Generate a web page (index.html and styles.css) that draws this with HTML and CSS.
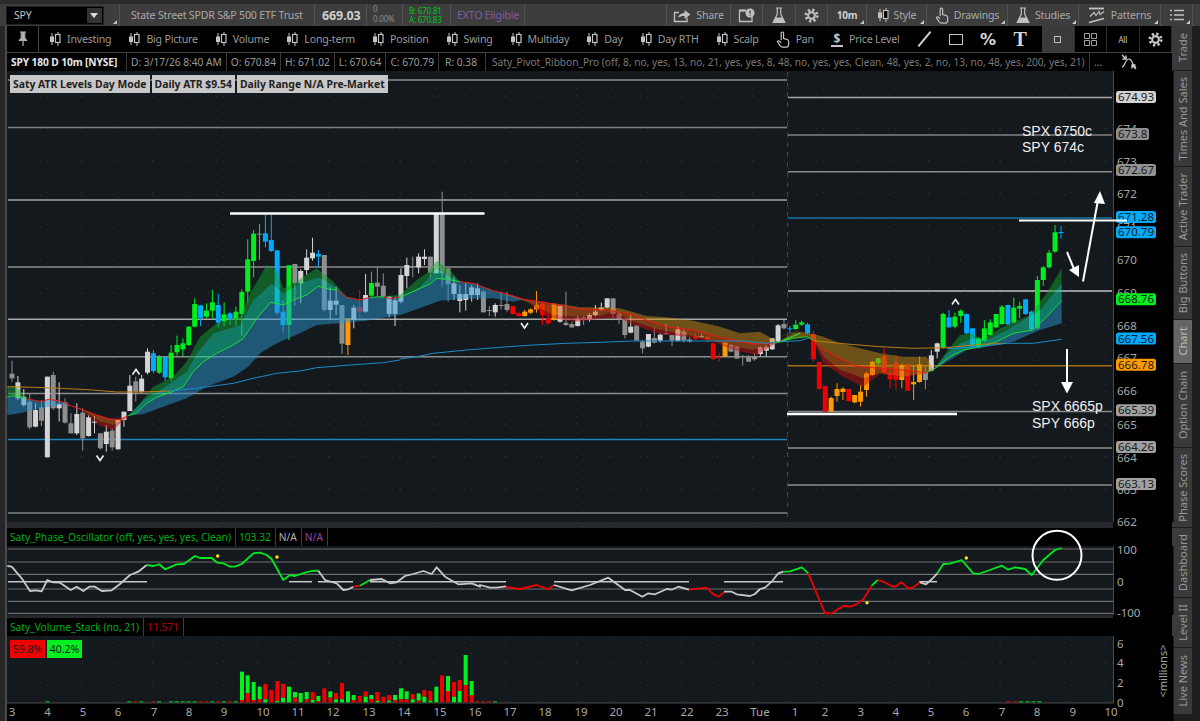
FILE: index.html
```html
<!DOCTYPE html>
<html lang="en">
<head>
    <meta charset="UTF-8">
    <title>SPY 10m Chart</title>
    <link rel="stylesheet" href="styles.css">
</head>
<body>
    <svg class="sprite" width="0" height="0">
        <symbol id="i-candle" viewBox="0 0 12 14">
            <path d="M3 1v12M9 0v14" stroke="currentColor" stroke-width="1"/>
            <rect x="1" y="4.5" width="4" height="5.5" fill="currentColor"/>
            <rect x="6.5" y="2.5" width="4.5" height="8" fill="#000" stroke="currentColor" stroke-width="1.2"/>
        </symbol>
        <symbol id="i-hand" viewBox="0 0 14 17">
            <path d="M5.2 9V2.2a1.2 1.2 0 0 1 2.4 0v5.3l3.2.8c1.2.3 1.9 1 1.9 2.2v2.4c0 2-1.3 3.3-3.2 3.3H6.8c-1.3 0-2.2-.6-2.9-1.7L1.4 10.4c.6-.9 1.6-.8 2.3-.1L5.2 11.6" fill="none" stroke="currentColor" stroke-width="1.2"/>
        </symbol>
        <symbol id="i-flask" viewBox="0 0 14 17">
            <path d="M4 1h6M5.3 1v6L1.2 15.5h11.6L8.7 7V1" fill="none" stroke="currentColor" stroke-width="1.2"/>
            <path d="M3.8 10.5h6.4l2.6 5H1.2z" fill="currentColor"/>
        </symbol>
        <symbol id="i-gear" viewBox="-8 -8 16 16">
            <circle r="6" fill="none" stroke="currentColor" stroke-width="3" stroke-dasharray="2.36 2.36"/>
            <circle r="3.6" fill="none" stroke="currentColor" stroke-width="2.2"/>
        </symbol>
        <symbol id="i-share" viewBox="0 0 18 15">
            <path d="M14 9.5V13.5H1.5V4.5H6" fill="none" stroke="currentColor" stroke-width="1.4"/>
            <path d="M5 10c.6-3.4 3.2-5 6.5-5V2l6 4.6-6 4.4V8c-2.8 0-4.8.6-6.5 2z" fill="currentColor"/>
        </symbol>
        <symbol id="i-alert" viewBox="0 0 17 15">
            <path d="M8 2.5H1.5V13.5H14V9" fill="none" stroke="currentColor" stroke-width="1.3"/>
            <path d="M1.5 2.5h6" stroke="currentColor" stroke-width="2"/>
            <circle cx="12" cy="5" r="4.5" fill="currentColor"/>
            <path d="M12 2.5v3M12 6.5v1" stroke="#3d3d3d" stroke-width="1.3"/>
        </symbol>
        <symbol id="i-pattern" viewBox="0 0 18 17">
            <path d="M1 1.5h15" stroke="currentColor" stroke-width="1.8"/>
            <path d="M2 9.5l4-4 2 3 3-4 1 3 4-3" fill="none" stroke="currentColor" stroke-width="1.2"/>
            <path d="M1 15.5l15-4" stroke="currentColor" stroke-width="1.8"/>
        </symbol>
        <symbol id="i-list" viewBox="0 0 14 12">
            <path d="M0 1.5h2M4 1.5h10M0 6h2M4 6h10M0 10.5h2M4 10.5h10" stroke="currentColor" stroke-width="1.6"/>
        </symbol>
        <symbol id="i-grid" viewBox="0 0 13 13">
            <path d="M.5.5h5v5h-5zM7.5.5h5v5h-5zM.5 7.5h5v5h-5zM7.5 7.5h5v5h-5z" fill="none" stroke="currentColor" stroke-width="1"/>
        </symbol>
        <symbol id="i-pin" viewBox="0 0 10 16">
            <path d="M2 1h6M3.2 1v6L1 9.5h8L6.8 7V1" fill="currentColor" stroke="currentColor" stroke-width="1"/>
            <path d="M5 10v5" stroke="currentColor" stroke-width="1.2"/>
        </symbol>
        <symbol id="i-scale" viewBox="0 0 16 16">
            <path d="M1 13c3 0 3-8 7-8s3 8 7 8" fill="none" stroke="currentColor" stroke-width="1.2"/>
            <path d="M1 1l4 4M5 1.5V5H1.5M15 15l-4-4M11 14.5V11h3.5" fill="none" stroke="currentColor" stroke-width="1.4"/>
        </symbol>
    </svg>

    <header class="top-bar">
        <div class="info-cell symbol-cell corner">
            <div class="symbol-box"><span>SPY</span><span class="symbol-drop"></span></div>
        </div>
        <div class="info-cell desc-cell">State Street SPDR S&amp;P 500 ETF Trust</div>
        <div class="info-cell price-cell">669.03</div>
        <div class="info-cell change-cell"><span>0</span><span>0.00%</span></div>
        <div class="info-cell quote-cell"><span>B: 670.81</span><span>A: 670.83</span></div>
        <div class="info-cell exto-cell">EXTO Eligible</div>
        <div class="top-tools">
            <div class="tool"><svg class="ic-share"><use href="#i-share"/></svg>Share</div>
            <div class="tool"><svg class="ic-alert"><use href="#i-alert"/></svg></div>
            <div class="tool"><svg class="ic-flask"><use href="#i-flask"/></svg></div>
            <div class="tool"><svg class="ic-gear"><use href="#i-gear"/></svg></div>
            <div class="tool corner tool-bold">10m</div>
            <div class="tool corner"><svg class="ic-candle"><use href="#i-candle"/></svg>Style</div>
            <div class="tool corner"><svg class="ic-hand"><use href="#i-hand"/></svg>Drawings</div>
            <div class="tool corner"><svg class="ic-flask"><use href="#i-flask"/></svg>Studies</div>
            <div class="tool corner"><svg class="ic-pattern"><use href="#i-pattern"/></svg>Patterns</div>
            <div class="tool corner"><svg class="ic-list"><use href="#i-list"/></svg></div>
        </div>
    </header>

    <div class="main">
        <div class="left-rail"></div>
        <div class="work">
            <nav class="quick-bar">
                <div class="pin-cell"><svg class="ic-pin"><use href="#i-pin"/></svg></div>
                <div class="quick-items">
                    <div class="quick"><svg class="ic-candle"><use href="#i-candle"/></svg>Investing</div>
                    <div class="quick"><svg class="ic-candle"><use href="#i-candle"/></svg>Big Picture</div>
                    <div class="quick"><svg class="ic-candle"><use href="#i-candle"/></svg>Volume</div>
                    <div class="quick"><svg class="ic-candle"><use href="#i-candle"/></svg>Long-term</div>
                    <div class="quick"><svg class="ic-candle"><use href="#i-candle"/></svg>Position</div>
                    <div class="quick"><svg class="ic-candle"><use href="#i-candle"/></svg>Swing</div>
                    <div class="quick"><svg class="ic-candle"><use href="#i-candle"/></svg>Multiday</div>
                    <div class="quick"><svg class="ic-candle"><use href="#i-candle"/></svg>Day</div>
                    <div class="quick"><svg class="ic-candle"><use href="#i-candle"/></svg>Day RTH</div>
                    <div class="quick"><svg class="ic-candle"><use href="#i-candle"/></svg>Scalp</div>
                    <div class="quick"><svg class="ic-hand"><use href="#i-hand"/></svg>Pan</div>
                    <div class="quick"><span class="dollar">$</span>Price Level</div>
                </div>
                <div class="draw-tools">
                    <div class="draw"><span class="draw-line"></span></div>
                    <div class="draw"><span class="draw-rect"></span></div>
                    <div class="draw draw-pct">%</div>
                    <div class="draw draw-t">T</div>
                </div>
                <div class="view-tools">
                    <div class="view view-on"><span class="view-box"></span></div>
                    <div class="view"><svg class="ic-grid"><use href="#i-grid"/></svg></div>
                    <div class="view view-all">All</div>
                    <div class="view"><svg class="ic-gear"><use href="#i-gear"/></svg></div>
                </div>
            </nav>

            <div class="legend-row">
                <div class="legend-cells">
                    <span class="legend-cell legend-title">SPY 180 D 10m [NYSE]</span>
                    <span class="legend-cell">D: 3/17/26 8:40 AM</span>
                    <span class="legend-cell">O: 670.84</span>
                    <span class="legend-cell">H: 671.02</span>
                    <span class="legend-cell">L: 670.64</span>
                    <span class="legend-cell">C: 670.79</span>
                    <span class="legend-cell legend-range">R: 0.38</span>
                    <span class="legend-cell legend-study">Saty_Pivot_Ribbon_Pro (off, 8, no, yes, 13, no, 21, yes, yes, 8, 48, no, yes, yes, Clean, 48, yes, 2, no, 13, no, 48, yes, 200, yes, 21)</span>
                    <span class="legend-cell legend-more">...</span>
                </div>
                <div class="legend-axis"><svg class="ic-scale"><use href="#i-scale"/></svg></div>
            </div>

            <div class="price-pane">
                <svg id="priceChart" class="pane-svg" viewBox="7 71 1165 451" width="1165" height="451"></svg>
                <div class="atr-labels">
                    <span class="atr-label">Saty ATR Levels Day Mode</span>
                    <span class="atr-label">Daily ATR $9.54</span>
                    <span class="atr-label">Daily Range N/A Pre-Market</span>
                </div>
            </div>
            <div class="pane-gap"></div>

            <div class="study-head">
                <span class="study-cell study-green">Saty_Phase_Oscillator (off, yes, yes, yes, Clean)</span>
                <span class="study-cell study-green">103.32</span>
                <span class="study-cell study-grey">N/A</span>
                <span class="study-cell study-purple">N/A</span>
            </div>
            <svg id="oscChart" class="pane-svg" viewBox="7 546 1165 69" width="1165" height="69"></svg>
            <div class="pane-gap pane-gap-small"></div>

            <div class="study-head">
                <span class="study-cell study-green">Saty_Volume_Stack (no, 21)</span>
                <span class="study-cell study-red">11.571</span>
            </div>
            <div class="volume-pane">
                <svg id="volChart" class="pane-svg" viewBox="7 636 1165 85" width="1165" height="85"></svg>
                <div class="vol-badges">
                    <span class="vol-badge vol-sell">59.8%</span>
                    <span class="vol-badge vol-buy">40.2%</span>
                </div>
            </div>
        </div>

        <aside class="side-tabs">
            <div class="side-tab tab-trade"><span>Trade</span></div>
            <div class="side-tab tab-times"><span>Times And Sales</span></div>
            <div class="side-tab tab-active"><span>Active Trader</span></div>
            <div class="side-tab tab-big"><span>Big Buttons</span></div>
            <div class="side-tab tab-chart"><span>Chart</span></div>
            <div class="side-tab tab-option"><span>Option Chain</span></div>
            <div class="side-tab tab-phase"><span>Phase Scores</span></div>
            <div class="side-tab tab-dash"><span>Dashboard</span></div>
            <div class="side-tab tab-level"><span>Level II</span></div>
            <div class="side-tab tab-news"><span>Live News</span></div>
        </aside>
    </div>

    <script src="chart.js"></script>
</body>
</html>
```

FILE: styles.css
```css
* {
    margin: 0;
    padding: 0;
    box-sizing: border-box;
    font-family: "Noto Sans", "Open Sans", sans-serif;
}

html, body {
    width: 1200px;
    height: 721px;
    overflow: hidden;
    background: #1e1e1e;
}

.sprite {
    position: absolute;
}

svg {
    display: block;
}

/* top bar */
.top-bar {
    display: flex;
    height: 26px;
    padding-right: 7px;
    background: #3d3d3d;
    border-top: 4px solid #2a2a2a;
    color: #a8a8a8;
    font-size: 10.6px;
    letter-spacing: -0.2px;
}

.info-cell {
    display: flex;
    align-items: center;
    height: 22px;
    border-right: 1px solid #525252;
}

.corner {
    position: relative;
}

.corner::after {
    content: "";
    position: absolute;
    right: 2px;
    bottom: 2px;
    border-left: 4px solid transparent;
    border-bottom: 4px solid #c4c4c4;
}

.symbol-cell {
    width: 120px;
    padding-left: 6px;
}

.symbol-box {
    display: flex;
    align-items: center;
    justify-content: space-between;
    width: 98px;
    height: 19px;
    padding: 0 1px 0 7px;
    background: #000;
    border: 1px solid #222;
    color: #c4c4c4;
    font-size: 10.5px;
}

.symbol-drop {
    position: relative;
    width: 15px;
    height: 15px;
    background: #333;
}

.symbol-drop::after {
    content: "";
    position: absolute;
    left: 3px;
    top: 5px;
    border-left: 4px solid transparent;
    border-right: 4px solid transparent;
    border-top: 5px solid #ddd;
}

.desc-cell {
    width: 195px;
    padding-left: 11px;
    white-space: nowrap;
}

.price-cell {
    width: 52px;
    padding-left: 7px;
    color: #cfcfcf;
    font-size: 12.5px;
    font-weight: 700;
    letter-spacing: -0.1px;
}

.change-cell {
    flex-direction: column;
    align-items: flex-start;
    width: 36px;
    padding-left: 6px;
    font-size: 8px;
    line-height: 9.5px;
    color: #8c8c8c;
}

.quote-cell {
    flex-direction: column;
    align-items: flex-start;
    justify-content: center;
    width: 48px;
    padding-left: 6px;
    font-size: 8px;
    line-height: 9.5px;
    color: #00c21e;
}

.exto-cell {
    width: 74px;
    padding-left: 6px;
    color: #7d5cab;
    white-space: nowrap;
}

.top-tools {
    display: grid;
    grid-template-columns: 64px 32px 33px 32px 39px 60px 81px 71px 82px 32px;
    height: 22px;
    margin-left: auto;
    border-left: 1px solid #525252;
}

.tool {
    display: flex;
    align-items: center;
    justify-content: center;
    gap: 5px;
    border-right: 1px solid #525252;
    white-space: nowrap;
}

.tool svg {
    color: #c0c0c0;
}

.tool-bold {
    color: #d0d0d0;
    font-size: 10px;
    font-weight: 700;
}

.ic-share { width: 18px; height: 15px; }
.ic-alert { width: 17px; height: 15px; }
.ic-flask { width: 14px; height: 17px; }
.ic-gear { width: 15px; height: 15px; }
.ic-candle { width: 12px; height: 14px; }
.ic-hand { width: 14px; height: 17px; }
.ic-pattern { width: 18px; height: 17px; }
.ic-list { width: 14px; height: 12px; }
.ic-pin { width: 10px; height: 16px; color: #b0b0b0; }
.ic-grid { width: 13px; height: 13px; color: #a0a0a0; }
.ic-scale { width: 16px; height: 16px; color: #cfcfcf; }

/* main area */
.main {
    display: flex;
    height: 695px;
}

.left-rail {
    width: 7px;
    background: #262626;
    border-right: 2px solid #4a4a4a;
}

.work {
    width: 1165px;
    background: #000;
}

.quick-bar {
    display: flex;
    height: 27px;
    background: #000;
    border-bottom: 1px solid #444;
    color: #9a9a9a;
    font-size: 10.6px;
    letter-spacing: -0.2px;
}

.pin-cell {
    display: flex;
    align-items: center;
    justify-content: center;
    width: 32px;
    border-right: 1px solid #444;
}

.quick-items {
    display: flex;
    align-items: center;
    gap: 17px;
    width: 869px;
    padding-left: 10px;
}

.quick {
    display: flex;
    align-items: center;
    gap: 6px;
    white-space: nowrap;
}

.quick svg {
    color: #c4c4c4;
}

.dollar {
    width: 12px;
    border-bottom: 2px solid #c4c4c4;
    color: #c4c4c4;
    font-size: 12px;
    font-weight: 700;
    line-height: 13px;
    text-align: center;
}

.draw-tools {
    display: grid;
    grid-template-columns: repeat(4, 32px);
    width: 134px;
}

.draw {
    display: flex;
    align-items: center;
    justify-content: center;
    color: #d8d8d8;
}

.draw-line {
    width: 19px;
    height: 2px;
    background: #d0d0d0;
    transform: rotate(-50deg);
}

.draw-rect {
    width: 14px;
    height: 11px;
    border: 1px solid #c4c4c4;
}

.draw-pct {
    font-family: "DejaVu Sans", sans-serif;
    font-size: 16px;
    font-weight: 700;
}

.draw-t {
    font-family: "Liberation Serif", serif;
    font-size: 20px;
    font-weight: 700;
}

.view-tools {
    display: grid;
    grid-template-columns: repeat(4, 32.5px);
}

.view {
    display: flex;
    align-items: center;
    justify-content: center;
    border-right: 1px solid #2c2c2c;
    color: #c8c8c8;
}

.view-on {
    background: #3a3a3a;
}

.view-box {
    width: 7px;
    height: 7px;
    border: 1px solid #c0c0c0;
}

.view-all {
    font-size: 8px;
}

.legend-row {
    display: flex;
    height: 18px;
}

.legend-cells {
    display: flex;
    gap: 1px;
    width: 1106px;
    background: #3a3a3a;
}

.legend-cell {
    display: flex;
    align-items: center;
    padding: 0 4px;
    background: #000;
    color: #9a9a9a;
    font-size: 10.2px;
    white-space: nowrap;
}

.legend-title {
    width: 119px;
    padding: 0 0 0 4px;
    color: #e8e8e8;
    font-weight: 700;
    letter-spacing: -0.1px;
}

.legend-range {
    padding-right: 8px;
    padding-left: 6px;
}

.legend-study {
    flex: 1;
    padding-left: 6px;
    color: #7a7a7a;
    font-size: 10.15px;
}

.legend-more {
    width: 23px;
}

.legend-axis {
    padding: 1px 0 0 8px;
}

.price-pane {
    position: relative;
    height: 451px;
}

.pane-svg {
    overflow: visible;
    position: relative;
}

.chart-note {
    font-family: "Liberation Sans", Arial, sans-serif;
}

.atr-labels {
    position: absolute;
    left: 3px;
    top: 4px;
    display: flex;
    gap: 2px;
}

.atr-label {
    height: 18px;
    padding: 0 3px;
    background: #c8c8c8;
    color: #222;
    font-size: 10.4px;
    font-weight: 700;
    line-height: 18px;
    white-space: nowrap;
}

.pane-gap {
    width: 1106px;
    height: 6px;
    background: #26282b;
}

.pane-gap-small {
    height: 3px;
}

.study-head {
    display: flex;
    width: 1106px;
    height: 18px;
    background: #000;
}

.study-cell {
    display: flex;
    align-items: center;
    padding: 0 4px 0 3px;
    border-right: 1px solid #3c3c3c;
    font-size: 10.2px;
    white-space: nowrap;
}

.study-green { color: #00b01a; }
.study-grey { color: #b4b4b4; }
.study-purple { color: #a040a8; }
.study-red { color: #b00000; }

.volume-pane {
    position: relative;
}

.vol-badges {
    position: absolute;
    left: 3px;
    top: 4px;
    display: flex;
    gap: 2px;
}

.vol-badge {
    width: 35px;
    height: 18px;
    color: #1a1a1a;
    font-size: 10.5px;
    line-height: 18px;
    text-align: center;
}

.vol-sell { background: #f00000; }
.vol-buy { background: #00f020; }

/* side tabs */
.side-tabs {
    display: flex;
    flex-direction: column;
    gap: 1px;
    width: 20px;
}

.side-tab {
    display: flex;
    align-items: center;
    justify-content: center;
    background: #3a3a3a;
    color: #999;
    font-size: 11px;
}

.side-tab span {
    writing-mode: vertical-rl;
    transform: rotate(180deg);
    white-space: nowrap;
}

.tab-trade { height: 44px; }
.tab-times { height: 95px; }
.tab-active { height: 79px; }
.tab-big { height: 72px; }
.tab-chart { height: 43px; background: #666; color: #bbb; }
.tab-option { height: 83px; }
.tab-phase { height: 79px; }
.tab-dash { height: 69px; }
.tab-level { height: 49px; }
.tab-news { height: 66px; }
```

FILE: chart.js
```js
const NS = "http://www.w3.org/2000/svg";

function add(parent, name, attrs, text) {
    const node = document.createElementNS(NS, name);
    for (const key in attrs) node.setAttribute(key, attrs[key]);
    if (text !== undefined) node.textContent = text;
    parent.appendChild(node);
    return node;
}

// points were read off 3x crops, so every list carries the crop origin
function pts(ox, oy, list) {
    const out = [];
    for (let i = 0; i < list.length; i += 2) {
        out.push([ox + list[i] / 3, oy + list[i + 1] / 3]);
    }
    return out;
}
const A = list => pts(0, 190, list);
const B = list => pts(400, 190, list);
const C = list => pts(780, 200, list);

const toStr = p => p.map(q => q[0].toFixed(1) + "," + q[1].toFixed(1)).join(" ");

const COLORS = {
    g: "#00ee20",
    b: "#00aaff",
    w: "#d4d4d4",
    y: "#8e8e8e",
    r: "#f00000",
    o: "#ff9a00"
};

const AXIS_X = 1113.5;

/* ---------- price pane ---------- */
const price = document.getElementById("priceChart");
add(price, "rect", { x: 7, y: 71, width: 1107, height: 451, fill: "#14191e" });
add(price, "rect", { x: AXIS_X, y: 71, width: 60, height: 451, fill: "#000" });

// faint dotted grid
for (let x = 47; x < 1113; x += 35.3) {
    add(price, "line", { x1: x, x2: x, y1: 72, y2: 522, stroke: "#2c3238", "stroke-dasharray": "1 7" });
}
for (let y = 96; y < 522; y += 32.8) {
    add(price, "line", { x1: 8, x2: 1113, y1: y, y2: y, stroke: "#2c3238", "stroke-dasharray": "1 7" });
}

// session break
add(price, "line", { x1: 787.5, x2: 787.5, y1: 72, y2: 522, stroke: "#3e444a", "stroke-dasharray": "5 5" });

const levels = [
    [8, 787, 80, "#8c8c8c"], [8, 787, 127.5, "#7c7c7c"], [8, 787, 200, "#a4a4a4"],
    [8, 787, 267, "#8c8c8c"], [8, 787, 319.3, "#a8a8a8"], [8, 787, 356.7, "#8c8c8c"],
    [8, 787, 393.5, "#8c8c8c"], [8, 787, 439.5, "#1e86bc"], [8, 787, 513, "#808080"],
    [788, 1112, 97.5, "#a4a4a4"], [788, 1112, 135, "#808080"], [788, 1112, 171.7, "#8c8c8c"],
    [788, 1112, 218, "#1672a4"], [788, 1112, 291, "#c0c0c0"], [788, 1112, 365.8, "#a66c10"],
    [788, 1112, 411.5, "#8c8c8c"], [788, 1112, 448, "#8c8c8c"], [788, 1112, 485, "#8c8c8c"]
];
levels.forEach(l => {
    add(price, "line", { x1: l[0], x2: l[1], y1: l[2], y2: l[2], stroke: l[3], "stroke-width": 1.5 });
});

// [top, bottom, wick top, wick bottom, colour]
const candlesA = [
    [551,565,512,575,"y"],[577,625,558,630,"w"],[620,645,597,650,"w"],[635,712,610,718,"y"],[660,710,640,712,"w"],
    [652,692,630,708,"y"],[560,802,560,802,"w"],[555,655,545,660,"y"],[642,655,577,695,"w"],[637,698,625,700,"y"],
    [700,730,670,730,"y"],[672,730,640,735,"w"],[668,745,655,782,"y"],[682,738,675,740,"w"],[695,698,678,730,"w"],
    [730,775,730,778,"y"],[725,762,705,785,"w"],[722,772,715,782,"y"],[690,778,690,778,"w"],[665,690,665,710,"w"],
    [587,663,555,663,"w"],[574,605,560,635,"y"],[566,605,555,608,"w"],[485,548,475,553,"w"],[490,543,480,550,"b"],
    [500,548,495,552,"g"],[501,562,500,573,"b"],[488,565,465,573,"g"],[465,487,437,497,"g"],[460,478,445,500,"g"],
    [410,465,408,468,"g"],[342,410,325,412,"g"],[346,384,345,408,"b"],[362,380,340,385,"g"],[337,362,300,385,"g"],
    [345,398,312,412,"b"],[373,394,337,408,"g"],[370,388,365,405,"b"],[365,388,350,408,"g"],[306,372,298,438,"g"],
    [208,305,148,338,"g"],[131,213,120,262,"g"],[131,134,102,210,"y"],[130,155,75,172,"b"],[150,183,75,186,"b"],
    [181,368,180,375,"b"],[365,405,332,428,"b"],[226,405,226,450,"g"],[222,280,222,347,"y"],[243,280,238,340,"w"],
    [203,240,178,255,"w"],[188,205,143,212,"w"],[192,200,180,232,"b"],[195,360,195,365,"y"],[332,360,292,388,"w"],
    [332,344,290,375,"w"],[345,461,345,492,"y"],[385,465,385,495,"o"],[353,390,345,415,"w"],[352,365,300,385,"r"],
    [315,365,252,368,"w"],[279,317,245,320,"g"],[278,290,233,320,"y"],[287,320,250,325,"y"],[320,372,318,382,"w"],
    [331,372,320,408,"w"],
    // these carry on into the next crop, same origin
    [255,335,235,340,"w"],[225,258,203,295,"w"],[228,231,200,262,"y"],[200,232,190,250,"w"],[200,207,178,225,"w"],
    [200,248,200,262,"y"],[70,250,70,250,"w"],[70,250,5,290,"y"],[235,283,235,335,"y"],[280,312,260,330,"w"],
    [312,333,285,367,"w"],[312,330,280,362,"w"],[292,315,285,335,"w"],[295,315,280,330,"w"],[305,367,300,367,"y"],
    [360,362,348,378,"y"],[345,367,340,380,"w"],[345,348,305,358,"y"],[342,360,305,365,"y"],[348,372,348,373,"r"],
    [370,378,365,380,"r"],[365,378,360,380,"o"],[358,368,355,372,"o"],[346,358,303,368,"o"],[342,375,335,405,"r"],
    [385,400,345,403,"r"],[343,390,340,392,"o"],[348,395,345,398,"w"],[398,405,305,408,"y"],[402,412,395,414,"y"],
    [385,408,378,410,"w"],[382,385,378,405,"y"],[375,387,370,395,"w"],[365,375,345,380,"w"],[353,360,338,362,"w"],
    [325,353,325,355,"w"],[325,372,325,388,"y"],[372,388,365,402,"y"],[388,435,388,445,"y"],[410,428,375,430,"w"],
    [406,452,406,452,"y"],[455,475,450,490,"y"],[432,470,432,472,"w"],[444,458,412,460,"y"],[434,452,430,458,"w"],
    [430,432,400,432,"y"],[435,452,435,468,"y"],[418,452,410,455,"w"],[424,452,415,458,"y"],[448,455,440,458,"y"],
    [438,448,430,450,"r"],[438,442,430,443,"y"],[441,449,438,458,"r"],[460,507,458,510,"r"],[500,502,488,515,"r"],
    [458,500,458,500,"o"],[465,485,462,487,"y"],[470,506,468,506,"y"],[498,500,495,527,"y"],[500,515,495,516,"y"],
    [500,508,490,512,"y"],[472,492,470,498,"w"],[470,482,465,500,"w"],[445,478,445,480,"w"],[406,455,402,458,"w"]
];
const candlesC = [
    [372,385,360,388,"y"],[385,388,378,400,"b"],[374,387,360,390,"g"],[367,374,362,378,"g"],[373,400,368,403,"b"],
    [402,478,392,485,"r"],[486,567,484,570,"r"],[558,635,558,635,"r"],[594,635,590,635,"o"],[567,588,550,605,"o"],
    [566,576,562,600,"o"],[567,603,567,606,"r"],[585,607,585,610,"o"],[575,605,555,620,"o"],[520,570,515,590,"o"],
    [485,525,483,527,"o"],[475,490,475,495,"g"],[468,518,445,520,"r"],[518,538,492,565,"r"],[488,540,465,568,"r"],
    [495,540,490,565,"o"],[493,572,490,572,"r"],[546,553,495,600,"o"],[493,546,470,548,"o"],[517,540,500,568,"y"],
    [466,512,450,514,"w"],[430,455,428,475,"w"],[342,442,338,445,"g"],[352,382,330,383,"b"],[350,380,338,385,"g"],
    [332,348,328,368,"g"],[342,400,340,402,"b"],[385,440,385,442,"b"],[415,443,412,445,"g"],[385,422,360,425,"g"],
    [367,405,358,408,"g"],[342,382,342,385,"g"],[320,372,315,375,"g"],[315,373,315,375,"b"],[323,368,293,370,"g"],
    [318,326,305,355,"g"],[298,342,298,345,"b"],[335,388,332,390,"b"],[240,385,228,388,"g"],[202,240,198,258,"g"],
    [158,202,150,205,"g"],[97,155,75,158,"g"],[96,99,78,116,"b"]
];

const STEP = 5.893;
function drawCandle(i, c, baseY) {
    const x = 12 + i * STEP;
    const y = v => baseY + v / 3;
    const fill = COLORS[c[4]];
    add(price, "line", { x1: x, x2: x, y1: y(c[2]), y2: y(c[3]), stroke: fill, "stroke-width": 1 });
    add(price, "rect", { x: x - 2.5, y: y(c[0]), width: 5, height: Math.max(1, (c[1] - c[0]) / 3), fill: fill });
}
candlesA.forEach((c, i) => drawCandle(i, c, 190));
candlesC.forEach((c, i) => drawCandle(i + candlesA.length, c, 200));

function band(top, bottom, fill, opacity) {
    add(price, "polygon", {
        points: toStr(top.concat(bottom.slice().reverse())),
        fill: fill,
        "fill-opacity": opacity
    });
}

const BLUE = "#2a96d0", GREEN = "#10a030", TEAL = "#10c8a0";
const BROWN = "#c88a10", ORANGE = "#e06010", RED = "#c81010";

// ribbon: first stretch on the far left
const line1 = A([22,620,40,617,60,620,80,627,100,630,125,635,145,628,180,633,215,648]);
band(line1, A([22,675,60,670,100,660,140,652,180,645,215,648]), BLUE, .5);
band(A([22,590,40,588,60,600,80,627]), A([22,620,40,617,60,620,80,627]), GREEN, .5);

const red1 = A([215,648,250,660,290,675,330,687,360,688,385,677]);
band(red1, A([215,648,250,662,300,695,340,705,385,677]), ORANGE, .5);
band(A([215,648,250,662,300,695,340,705,385,677]), A([215,648,250,664,300,708,340,720,385,677]), RED, .5);

// long bull stretch
const bull2 = A([385,677,410,668,440,640,470,622,510,608,550,590,580,545,610,515,650,490,700,465,730,445,770,385,812,337,850,345,880,330,920,315,955,289,990,298,1010,300])
    .concat(A([1040,322,1080,330,1110,322,1150,320,1170,325,1200,322])).concat(B([50,300,90,282,110,265,140,268,180,275,220,280,280,302,330,315,370,328]));
const blue2 = A([385,677,430,672,490,650,560,625,620,590,700,560,745,530,780,490,830,460,900,430,950,405,1020,400,1100,392,1200,375])
    .concat(B([50,358,100,340,120,332,200,326,280,325,340,335,370,328]));
band(bull2, blue2, BLUE, .5);
const ema13 = A([385,677,430,630,480,600,560,545,590,490,640,430,720,405,760,330,815,280,850,310,900,280,955,262,1000,285,1040,322,1080,330,1110,322,1200,320])
    .concat(B([60,290,110,235,140,255,180,275]));
const ema21top = A([385,677,410,668,440,640,470,622,510,608,550,590,580,545,610,515,650,490,700,465,730,445,770,385,812,337,850,345,880,330,920,315,955,289,990,298,1010,300,1040,322,1080,330,1110,322,1150,320,1200,322])
    .concat(B([50,300,90,282,110,265,140,268,180,275]));
band(ema13, ema21top, TEAL, .55);
const ema8 = A([385,677,420,640,460,590,520,560,560,515,600,440,650,400,720,380,750,310,800,225,830,240,850,295,880,280,950,235,1000,275,1040,320,1080,330,1110,322,1200,315])
    .concat(B([50,270,80,250,110,212,150,240,180,275]));
band(ema8, ema13, GREEN, .5);

// long bear stretch, the red line runs through the middle
const red2 = B([280,302,330,315,370,328,420,335,480,345,540,357,620,360,690,372,740,390,800,410,880,420,940,437,1000,450,1060,462,1120,460,1135,456]);
const brown2 = B([280,302,330,315,370,328,420,335,480,342,540,352,600,352,660,355,740,378,800,382,880,392,960,410,1020,430,1080,425,1135,456]);
const or2 = B([280,302,380,335,460,375,520,380,600,378,640,365,700,395,780,420,860,435,940,452,1000,470,1060,480,1135,456]);
const dr2 = B([280,302,380,335,440,380,520,395,620,385,660,385,700,405,780,432,860,440,940,455,1000,480,1070,495,1135,456]);
band(brown2, red2, BROWN, .5);
band(red2, or2, ORANGE, .5);
band(or2, dr2, RED, .5);

// short stretch at the open
const openLine = B([1135,456,1160,450,1200,430]).concat(C([0,425,40,415,80,410,100,420]));
band(B([1135,456,1160,440,1200,420]).concat(C([0,410,60,395,100,402])), openLine, BROWN, .5);

// morning bear stretch
const red3 = C([100,420,130,448,170,470,230,498,300,505,370,510,440,518,460,510]);
const brown3 = C([100,402,130,410,180,430,240,445,300,460,370,470,440,470,460,510]);
const or3 = C([100,420,130,470,180,510,250,535,300,520,370,530,440,518,460,510]);
const dr3 = C([100,420,130,490,190,530,250,560,300,522,370,532,440,520,460,510]);
band(brown3, red3, BROWN, .5);
band(red3, or3, ORANGE, .5);
band(or3, dr3, RED, .5);

// last bull stretch
const line4 = C([460,510,510,470,550,450,600,440,650,425,700,400,760,390,800,350,845,302]);
band(line4, C([460,510,510,480,560,450,620,440,700,425,780,390,845,370]), BLUE, .5);
const m13 = C([460,510,500,460,540,430,580,415,620,420,680,390,720,365,780,330,845,250]);
band(m13, line4, TEAL, .55);
band(C([460,510,500,455,540,405,575,400,610,420,660,385,750,345,800,280,845,205]), m13, GREEN, .5);

// ribbon edges and slow averages
function curve(svg, points, colour, width) {
    add(svg, "polyline", {
        points: toStr(points),
        fill: "none",
        stroke: colour,
        "stroke-width": width,
        "stroke-linejoin": "round"
    });
}
curve(price, A([22,620,40,617,60,620,80,627]), "#1fdc3a", 1);
curve(price, A([80,627,100,630,125,635,145,628,180,633,215,648,250,660,290,675,330,687,360,688,385,677]), "#f01818", 1);
curve(price, A([385,677,410,668,440,640,470,622,510,608,550,590,580,545,610,515,650,490,700,465,730,445,770,385,812,337,850,345,880,330,920,315,955,289,990,298,1010,300]), "#1fdc3a", 1);
curve(price, A([1010,300,1040,322,1080,330,1110,322]), "#f01818", 1);
curve(price, A([1110,322,1150,320]), "#1fdc3a", 1);
curve(price, A([1150,320,1170,325,1200,322]), "#f01818", 1);
curve(price, B([0,322,50,300,90,282,110,265,140,268,180,275]), "#1fdc3a", 1);
curve(price, B([180,275,220,280,280,302,330,315,370,328,420,335,480,345,540,357,620,360,690,372,740,390,800,410,880,420,940,437,1000,450,1060,462,1120,460]), "#f01818", 1);
curve(price, B([1120,460,1140,456,1200,430]).concat(C([0,425,40,415,80,410,100,420])), "#1fdc3a", 1);
curve(price, C([100,420,130,448,170,470,230,498,300,505,370,510,440,518]), "#f01818", 1);
curve(price, C([440,518,465,505,510,470,550,450,600,440,650,425,700,400,760,390,800,350,845,302]), "#1fdc3a", 1);

curve(price, A([22,590,100,592,180,595,280,600,350,606,420,606,510,603]), "#c07c10", 1);
curve(price, A([510,603,590,595,700,580,760,565,830,550,900,543,950,533,1050,525,1150,518,1200,510]), "#1a8cc8", 1);
curve(price, B([0,507,50,500,100,490,200,480,300,472,400,465,500,460,600,457,700,453,1030,453,1100,460,1135,455]), "#1a8cc8", 1);
curve(price, C([0,425,60,422,85,414]), "#1a8cc8", 1);
curve(price, C([100,422,200,432,300,440,400,445,500,443,600,433,680,430]), "#c07c10", 1);
curve(price, C([500,446,600,440,680,430,760,430,845,418]), "#1a8cc8", 1);

// small chevrons
function chevron(x, y, up) {
    const d = up ? -2.5 : 2.5;
    add(price, "polyline", {
        points: (x - 3.5) + "," + (y - d) + " " + x + "," + (y + d) + " " + (x + 3.5) + "," + (y - d),
        fill: "none", stroke: "#f0f0f0", "stroke-width": 1.6
    });
}
chevron(136, 372, true);
chevron(100, 458, false);
chevron(524.5, 325.5, false);
chevron(955.5, 302, true);

// price axis
add(price, "line", { x1: AXIS_X, x2: AXIS_X, y1: 71, y2: 522, stroke: "#4a4a4a" });
const ticks = [[674,129],[673,161.5],[672,194],[671,227],[670,260],[669,292.5],[668,325.5],[667,358],[666,391],[665,424.5],[664,457.5],[663,490],[662,522]];
ticks.forEach(t => {
    add(price, "text", { x: 1117, y: t[1] + 4, fill: "#a8a8a8", "font-size": 11.5 }, t[0]);
});
const priceTags = [
    [97, "674.93", "#d2d2d2", 40], [134, "673.8", "#8e8e8e", 33], [170, "672.67", "#929292", 40],
    [217, "671.28", "#00aaff", 40], [232.3, "670.79", "#00aaff", 40], [299.3, "668.76", "#00f020", 40],
    [338.5, "667.56", "#00aaff", 40], [364.7, "666.78", "#ff9a00", 40], [410.3, "665.39", "#a0a0a0", 40],
    [447, "664.26", "#a0a0a0", 40], [484, "663.13", "#a0a0a0", 40]
];
priceTags.forEach(t => {
    add(price, "rect", { x: 1116, y: t[0] - 6, width: t[3], height: 12, rx: 2.5, fill: t[2] });
    add(price, "text", { x: 1118, y: t[0] + 4, fill: "#1a1a1a", "font-size": 11.5 }, t[1]);
});

// hand drawn marks
const MARK = "#ffffff";
add(price, "line", { x1: 230, x2: 484.5, y1: 213.5, y2: 213.5, stroke: MARK, "stroke-width": 2.5 });
add(price, "line", { x1: 787, x2: 957, y1: 414, y2: 414, stroke: MARK, "stroke-width": 2.5 });
add(price, "line", { x1: 1019, x2: 1127, y1: 220.5, y2: 220.5, stroke: MARK, "stroke-width": 2 });
add(price, "line", { x1: 1083, y1: 281.5, x2: 1098, y2: 200, stroke: MARK, "stroke-width": 2 });
add(price, "polygon", { points: "1100,191 1094,203 1105,204", fill: MARK });
add(price, "line", { x1: 1067, y1: 252, x2: 1074, y2: 269, stroke: MARK, "stroke-width": 2 });
add(price, "polygon", { points: "1079,277 1069,270 1079,265", fill: MARK });
add(price, "line", { x1: 1067, y1: 349, x2: 1067, y2: 384, stroke: MARK, "stroke-width": 2 });
add(price, "polygon", { points: "1061,382 1073,382 1067,393.5", fill: MARK });

const notes = [[1022, 136, "SPX 6750c"], [1022, 152, "SPY 674c"], [1032, 411, "SPX 6665p"], [1032, 428, "SPY 666p"]];
notes.forEach(n => {
    add(price, "text", { x: n[0], y: n[1], fill: "#f0f0f0", "font-size": 14, class: "chart-note" }, n[2]);
});

/* ---------- oscillator pane ---------- */
const osc = document.getElementById("oscChart");
add(osc, "rect", { x: 7, y: 546, width: 1107, height: 69, fill: "#14191e" });
add(osc, "rect", { x: AXIS_X, y: 546, width: 60, height: 69, fill: "#000" });
[549, 562, 574.3, 589, 601.3, 613.3].forEach(y => {
    add(osc, "line", { x1: 8, x2: 1113, y1: y, y2: y, stroke: "#6e6e6e", "stroke-width": 1.2 });
});
add(osc, "line", { x1: AXIS_X, x2: AXIS_X, y1: 546, y2: 615, stroke: "#4a4a4a" });

// zero line only shows while price is in a squeeze
const zero = [[8,147],[289,312],[318,353],[370,506],[554,689],[724,783],[919,937]];
zero.forEach(z => {
    add(osc, "line", { x1: z[0], x2: z[1], y1: 581.7, y2: 581.7, stroke: "#c8c8c8", "stroke-width": 1.5 });
});

const P = list => pts(0, 520, list);
const Q = list => pts(480, 525, list);
const R = list => pts(700, 520, list);
const GREY = "#c8c8c8", LIME = "#00e81e", REDL = "#f00000";
const oscLines = [
    [P([22,138,35,140,65,175,90,213,108,211,125,214,142,180,160,187,180,188,212,210,230,200,250,213,268,200,285,200,305,213,335,211,360,192,390,165,415,155,440,135]), GREY],
    [P([440,135,460,138,478,133,495,148,530,133,552,132,585,108,600,114,635,114,652,128,670,130,690,140,705,140,725,132,760,100,780,98,800,105,815,118,850,180,870,165,885,168,915,158,935,153,955,152]), LIME],
    [P([955,152,975,180,1010,190,1030,210,1045,208,1060,200]), GREY],
    [P([1060,200,1080,197]), REDL],
    [P([1080,197,1110,180]), LIME],
    [P([1110,180,1145,177,1170,190,1190,187,1215,168,1240,162,1270,153,1295,162,1310,142,1335,170,1375,193,1415,190,1440,200]).concat(Q([0,180,30,188,50,188,78,184])), GREY],
    [Q([78,186,120,192,170,180,205,193,222,180]), REDL],
    [Q([222,180,275,196,330,180,385,158,435,195,450,195,487,215,505,205,525,208,560,192,575,194,595,185,627,194]), GREY],
    [Q([627,194,680,188,700,208,717,215,733,201]), REDL],
    [R([72,215,95,215,110,223,150,228,165,222,180,207,195,203,215,185,235,160,250,155]), GREY],
    [R([250,155,270,154,305,142,325,160]), LIME],
    [R([325,160,375,280,395,280,430,258,450,260,470,253,490,238,515,197]), REDL],
    [R([515,197,533,180]), LIME],
    [R([533,180,550,185,575,198,585,200,605,187,625,205,640,202,660,187]), REDL],
    [R([660,187,678,193,695,178,712,160]), GREY],
    [R([712,160,730,132,750,131,785,120,820,160,835,162,870,150,905,137,925,149,945,142,975,147,995,165,1030,120,1065,90,1085,84]), LIME]
];
oscLines.forEach(l => curve(osc, l[0], l[1], 1.8));

[[217.7,556],[277,557],[867,602.7],[966.3,558]].forEach(d => {
    add(osc, "circle", { cx: d[0], cy: d[1], r: 1.7, fill: "#ffe600" });
});
add(osc, "circle", { cx: 1057, cy: 555.3, r: 24.5, fill: "none", stroke: "#fff", "stroke-width": 2 });

[["100", 550], ["0", 582], ["-100", 613]].forEach(t => {
    add(osc, "text", { x: 1117, y: t[1] + 4, fill: "#a8a8a8", "font-size": 11.5 }, t[0]);
});

/* ---------- volume pane ---------- */
const vol = document.getElementById("volChart");
add(vol, "rect", { x: 7, y: 636, width: 1107, height: 67, fill: "#14191e" });
add(vol, "rect", { x: 7, y: 703, width: 1166, height: 18, fill: "#000" });
add(vol, "rect", { x: AXIS_X, y: 636, width: 60, height: 85, fill: "#000" });
for (let x = 47; x < 1113; x += 35.3) {
    add(vol, "line", { x1: x, x2: x, y1: 637, y2: 702, stroke: "#2c3238", "stroke-dasharray": "1 7" });
}
[643, 663, 683].forEach(y => {
    add(vol, "line", { x1: 8, x2: 1113, y1: y, y2: y, stroke: "#2c3238", "stroke-dasharray": "1 7" });
});
add(vol, "line", { x1: AXIS_X, x2: AXIS_X, y1: 636, y2: 703, stroke: "#4a4a4a" });
add(vol, "line", { x1: 7, x2: AXIS_X, y1: 703, y2: 703, stroke: "#4a4a4a" });

// [colour on top, x, top, split]
const stacks = [
    ["g",726,455,540],["g",743,466,520],["g",761,486,540],["g",779,500,538],["r",796,492,538],["r",814,510,547],
    ["r",832,483,543],["r",849,492,533],["g",867,500,547],["g",885,516,533],["g",902,519,547],["g",920,516,538],
    ["r",938,516,540],["g",955,528,543],["r",973,505,547],["g",991,514,533],["r",1008,519,538],["r",1026,489,538],
    ["g",1044,514,547],["g",1061,525,540],["r",1079,528,547],["r",1097,514,530],["g",1114,525,537],["r",1132,516,543],
    ["r",1150,530,547],["r",1167,525,542],["g",1185,525,541],["g",1203,505,538],["g",1220,514,538],["r",1238,522,538],
    ["g",1256,520,542],["r",1273,510,530],["r",1291,513,542],["g",1309,500,547],["r",1326,466,547],["g",1344,468,513],
    ["r",1362,486,530],["r",1379,480,513],["g",1397,405,495],["g",1415,483,525]
];
const VOL_Y = v => 520 + v / 3;
stacks.forEach(s => {
    const x = s[1] / 3 - 2;
    const other = s[0] === "g" ? "r" : "g";
    const bright = { g: "#00f020", r: "#f00000" };
    add(vol, "rect", { x: x, y: VOL_Y(s[2]), width: 4, height: (s[3] - s[2]) / 3, fill: bright[s[0]] });
    add(vol, "rect", { x: x, y: VOL_Y(s[3]), width: 4, height: (547 - s[3]) / 3, fill: bright[other] });
});
const tiny = [
    [142,"g"],[388,"g"],[406,"r"],[424,"g"],[460,"r"],[477,"g"],[513,"g"],[530,"g"],[548,"g"],[566,"g"],[584,"g"],
    [601,"r"],[619,"r"],[637,"g"],[655,"r"],[672,"g"],[690,"r"],[707,"g"],[1432,"r"],[1450,"r"],[1467,"r"],[1485,"g"],
    [3025,"r"],[3045,"r"],[3063,"g"],[3083,"g"],[3100,"g"],[3118,"g"]
];
tiny.forEach(t => {
    add(vol, "rect", {
        x: t[0] / 3 - 2, y: 701, width: 4, height: 1.5,
        fill: t[1] === "g" ? "#0c9a24" : "#9a1010"
    });
});

[["6", 644], ["4", 663], ["2", 683], ["0", 702.5]].forEach(t => {
    add(vol, "text", { x: 1117, y: t[1] + 4, fill: "#a8a8a8", "font-size": 11.5 }, t[0]);
});
add(vol, "text", {
    x: 1167, y: 671, fill: "#a8a8a8", "font-size": 11, "text-anchor": "middle",
    transform: "rotate(-90 1167 671)"
}, "<millions>");

const hours = [
    ["3",12],["4",47.5],["5",83],["6",118],["7",154],["8",189],["9",224],["10",263],["11",298],["12",333],["13",369],
    ["14",404],["15",440],["16",475],["17",510],["18",545],["19",581],["20",616],["21",651],["22",687],["23",722],
    ["Tue",760],["1",795],["2",825],["3",860.7],["4",895.7],["5",931],["6",966],["7",1002],["8",1037],["9",1072.7],["10",1111]
];
hours.forEach(h => {
    add(vol, "text", { x: h[1], y: 716, fill: "#a8a8a8", "font-size": 11.5, "text-anchor": "middle" }, h[0]);
});
```
